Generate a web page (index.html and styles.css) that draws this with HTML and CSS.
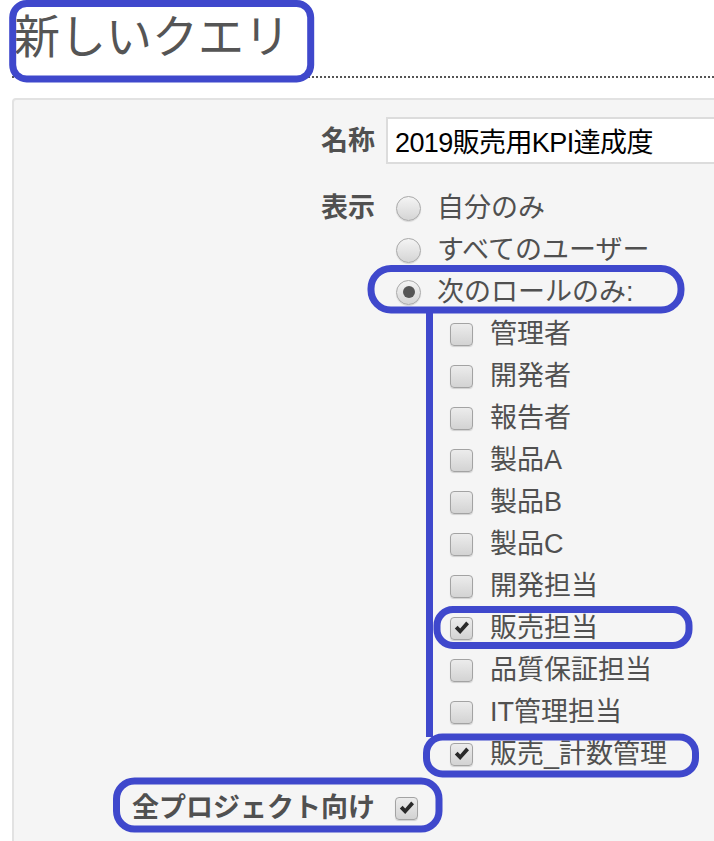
FILE: index.html
```html
<!DOCTYPE html>
<html lang="ja">
<head>
<meta charset="utf-8">
<title>新しいクエリ</title>
<link rel="stylesheet" href="styles.css">
</head>
<body>
<div class="page">
  <h2 class="title">新しいクエリ</h2>
  <div class="box">
    <div class="field name-field">
      <label class="lbl">名称</label>
      <div class="ctl"><input class="text-input" type="text" value="2019販売用KPI達成度"></div>
    </div>
    <div class="field vis-field">
      <span class="lbl">表示</span>
      <div class="ctl">
        <div class="opt"><span class="radio"></span><span class="txt">自分のみ</span></div>
        <div class="opt"><span class="radio"></span><span class="txt">すべてのユーザー</span></div>
        <div class="opt"><span class="radio on"></span><span class="txt">次のロールのみ:</span></div>
        <div class="roles">
          <div class="opt"><span class="cb"></span><span class="txt">管理者</span></div>
          <div class="opt"><span class="cb"></span><span class="txt">開発者</span></div>
          <div class="opt"><span class="cb"></span><span class="txt">報告者</span></div>
          <div class="opt"><span class="cb"></span><span class="txt">製品A</span></div>
          <div class="opt"><span class="cb"></span><span class="txt">製品B</span></div>
          <div class="opt"><span class="cb"></span><span class="txt">製品C</span></div>
          <div class="opt"><span class="cb"></span><span class="txt">開発担当</span></div>
          <div class="opt"><span class="cb"><svg class="chk" viewBox="0 0 16 16"><path d="M0.8 8.4 L3.6 5.8 L6.2 8.6 L12.2 1.6 L15 4.2 L6.2 14 Z"/></svg></span><span class="txt">販売担当</span></div>
          <div class="opt"><span class="cb"></span><span class="txt">品質保証担当</span></div>
          <div class="opt"><span class="cb"></span><span class="txt">IT管理担当</span></div>
          <div class="opt"><span class="cb"><svg class="chk" viewBox="0 0 16 16"><path d="M0.8 8.4 L3.6 5.8 L6.2 8.6 L12.2 1.6 L15 4.2 L6.2 14 Z"/></svg></span><span class="txt">販売_計数管理</span></div>
        </div>
      </div>
    </div>
    <div class="field all-field">
      <span class="lbl">全プロジェクト向け</span>
      <div class="ctl all-ctl"><span class="cb"><svg class="chk" viewBox="0 0 16 16"><path d="M0.8 8.4 L3.6 5.8 L6.2 8.6 L12.2 1.6 L15 4.2 L6.2 14 Z"/></svg></span></div>
    </div>
  </div>
</div>
<svg class="marks" width="714" height="841" viewBox="0 0 714 841">
  <rect x="12.7" y="3.5" width="298" height="75.5" rx="14"/>
  <rect x="371" y="268.5" width="310" height="41.5" rx="20"/>
  <line x1="429.5" y1="310" x2="429.5" y2="737"/>
  <rect x="437" y="609.5" width="252" height="36" rx="16"/>
  <rect x="426.5" y="737" width="269" height="37" rx="16"/>
  <rect x="116.5" y="781" width="322.5" height="48" rx="18"/>
</svg>
</body>
</html>
```
FILE: styles.css
```css
html, body {
  margin: 0;
  padding: 0;
  overflow: hidden;
  background: #fff;
}
body {
  position: relative;
  width: 714px;
  height: 841px;
  font-family: "Liberation Sans", "Noto Sans CJK JP", sans-serif;
  font-size: 27px;
  color: #505050;
}
.page {
  padding-left: 12px;
}
.title {
  margin: 0;
  padding: 15px 0 16px 2px;
  font-size: 46px;
  line-height: 45px;
  font-weight: normal;
  color: #555;
  border-bottom: 2px dotted #555;
}
.box {
  margin-top: 20px;
  width: 800px;
  background: #f5f5f5;
  border: 2px solid #e2e2e2;
  border-radius: 4px;
  padding: 17px 0 80px 0;
}
.field {
  display: grid;
  grid-template-columns: 361px 1fr;
  column-gap: 11px;
}
.lbl {
  text-align: right;
  font-weight: bold;
  line-height: 42px;
  color: #505050;
}
.name-field {
  align-items: center;
}
.text-input {
  display: block;
  box-sizing: border-box;
  width: 420px;
  height: 47px;
  margin: 0;
  padding: 0 7px;
  border: 2px solid #dcdcdc;
  background: #fff;
  font-family: "Liberation Sans", "Noto Sans CJK JP", sans-serif;
  font-size: 27px;
  letter-spacing: -0.6px;
  color: #000;
  outline: none;
}
.vis-field {
  margin-top: 23px;
}
.opt {
  height: 42px;
  display: flex;
  align-items: center;
  line-height: 42px;
  white-space: nowrap;
}
.radio {
  box-sizing: border-box;
  width: 25px;
  height: 25px;
  margin-left: 10px;
  margin-right: 16px;
  border-radius: 50%;
  border: 1px solid #a9a9a9;
  background: linear-gradient(#f4f4f4, #d5d5d5);
  box-shadow: 0 1px 1px rgba(0,0,0,0.12);
  display: flex;
  align-items: center;
  justify-content: center;
  flex: none;
}
.radio.on::after {
  content: "";
  width: 12px;
  height: 12px;
  border-radius: 50%;
  background: #555;
}
.roles {
  padding-left: 64px;
}
.cb {
  box-sizing: border-box;
  width: 23px;
  height: 23px;
  margin-right: 17px;
  border-radius: 4px;
  border: 1px solid #a3a3a3;
  background: linear-gradient(#ececec, #d3d3d3);
  box-shadow: 0 1px 1px rgba(0,0,0,0.15);
  display: flex;
  align-items: center;
  justify-content: center;
  flex: none;
}
.chk {
  width: 16px;
  height: 16px;
  fill: #2a2a2a;
}
.all-field {
  margin-top: 12px;
}
.all-ctl {
  display: flex;
  align-items: center;
  height: 42px;
  padding-left: 9px;
}
.marks {
  position: absolute;
  left: 0;
  top: 0;
  fill: none;
  stroke: #3f48cc;
  stroke-width: 7;
  pointer-events: none;
}
```
